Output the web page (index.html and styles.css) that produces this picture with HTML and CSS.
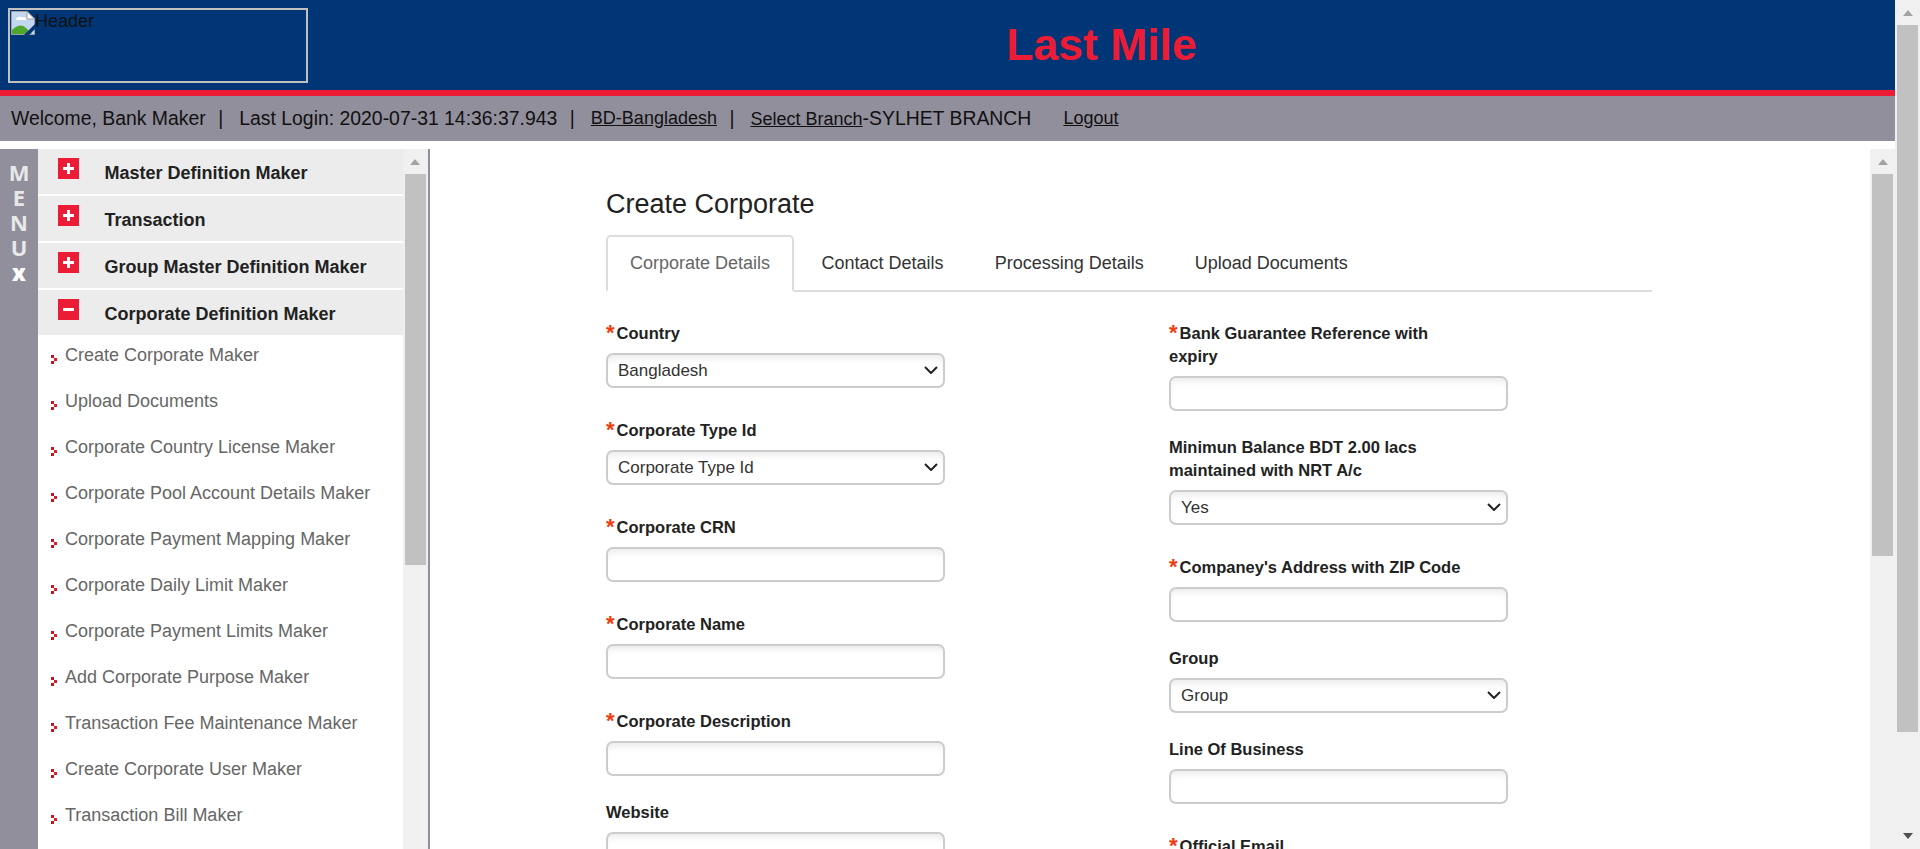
FILE: index.html
```html
<!DOCTYPE html>
<html lang="en">
<head>
    <meta charset="UTF-8">
    <meta name="viewport" content="width=device-width, initial-scale=1.0">
    <title>Last Mile - Create Corporate</title>
    <link rel="stylesheet" href="styles.css">
</head>
<body>
    <div class="page">
        <div class="page-content">
            <header class="header">
                <div class="header-logo">
                    <svg class="broken-img" viewBox="0 0 24 24" width="24" height="24">
                        <path d="M0.5 0.5H16L23.5 8V23.5H0.5Z" fill="#c3d7f0" stroke="#a0a0a0"/>
                        <path d="M16 0.5V8H23.5Z" fill="#fff" stroke="#a0a0a0"/>
                        <path d="M5 9C5 6 9 5 11 6.5C13 5 16 7 15.5 9Z" fill="#fff"/>
                        <path d="M1 23V19C6 14 11 13 15 17L21 23Z" fill="#4fa62f"/>
                        <path d="M13 24L24 13V18L18 24Z" fill="#003675"/>
                    </svg>
                    <span class="header-alt">Header</span>
                </div>
                <h1 class="header-title">Last Mile</h1>
            </header>
            <nav class="topbar">
                <span>Welcome, Bank Maker</span>
                <span class="sep">|</span>
                <span>Last Login: 2020-07-31 14:36:37.943</span>
                <span class="sep">|</span>
                <a href="#">BD-Bangladesh</a>
                <span class="sep">|</span>
                <span><a href="#">Select Branch</a>-SYLHET BRANCH</span>
                <a class="logout" href="#">Logout</a>
            </nav>
            <div class="workspace">
                <div class="menu-tab">
                    <span>M</span><span>E</span><span>N</span><span>U</span><span class="menu-close">x</span>
                </div>
                <aside class="menu">
                    <div class="menu-head">
                        <svg class="toggle" viewBox="0 0 21 21"><rect width="21" height="21" fill="#ed1c36"/><path d="M5 10.5H16M10.5 5V16" stroke="#fff" stroke-width="3"/></svg>
                        <span>Master Definition Maker</span>
                    </div>
                    <div class="menu-head">
                        <svg class="toggle" viewBox="0 0 21 21"><rect width="21" height="21" fill="#ed1c36"/><path d="M5 10.5H16M10.5 5V16" stroke="#fff" stroke-width="3"/></svg>
                        <span>Transaction</span>
                    </div>
                    <div class="menu-head">
                        <svg class="toggle" viewBox="0 0 21 21"><rect width="21" height="21" fill="#ed1c36"/><path d="M5 10.5H16M10.5 5V16" stroke="#fff" stroke-width="3"/></svg>
                        <span>Group Master Definition Maker</span>
                    </div>
                    <div class="menu-head">
                        <svg class="toggle" viewBox="0 0 21 21"><rect width="21" height="21" fill="#ed1c36"/><path d="M5 10.5H16" stroke="#fff" stroke-width="3"/></svg>
                        <span>Corporate Definition Maker</span>
                    </div>
                    <ul class="menu-list">
                        <li><a href="#">Create Corporate Maker</a></li>
                        <li><a href="#">Upload Documents</a></li>
                        <li><a href="#">Corporate Country License Maker</a></li>
                        <li><a href="#">Corporate Pool Account Details Maker</a></li>
                        <li><a href="#">Corporate Payment Mapping Maker</a></li>
                        <li><a href="#">Corporate Daily Limit Maker</a></li>
                        <li><a href="#">Corporate Payment Limits Maker</a></li>
                        <li><a href="#">Add Corporate Purpose Maker</a></li>
                        <li><a href="#">Transaction Fee Maintenance Maker</a></li>
                        <li><a href="#">Create Corporate User Maker</a></li>
                        <li><a href="#">Transaction Bill Maker</a></li>
                    </ul>
                </aside>
                <div class="scrollbar menu-scroll">
                    <div class="arrow-up"></div>
                    <div class="thumb thumb-menu"></div>
                </div>
                <main class="main">
                    <h2 class="main-title">Create Corporate</h2>
                    <div class="tabs">
                        <a class="tab active" href="#">Corporate Details</a>
                        <a class="tab" href="#">Contact Details</a>
                        <a class="tab" href="#">Processing Details</a>
                        <a class="tab" href="#">Upload Documents</a>
                    </div>
                    <form class="form-grid">
                        <div class="form-col">
                            <div class="field">
                                <label class="req"><i>*</i>Country</label>
                                <select><option>Bangladesh</option></select>
                            </div>
                            <div class="field">
                                <label class="req"><i>*</i>Corporate Type Id</label>
                                <select><option>Corporate Type Id</option></select>
                            </div>
                            <div class="field">
                                <label class="req"><i>*</i>Corporate CRN</label>
                                <input type="text">
                            </div>
                            <div class="field">
                                <label class="req"><i>*</i>Corporate Name</label>
                                <input type="text">
                            </div>
                            <div class="field">
                                <label class="req"><i>*</i>Corporate Description</label>
                                <input type="text">
                            </div>
                            <div class="field">
                                <label>Website</label>
                                <input type="text">
                            </div>
                        </div>
                        <div class="form-col">
                            <div class="field">
                                <label class="req"><i>*</i>Bank Guarantee Reference with expiry</label>
                                <input type="text">
                            </div>
                            <div class="field">
                                <label>Minimun Balance BDT 2.00 lacs maintained with NRT A/c</label>
                                <select><option>Yes</option></select>
                            </div>
                            <div class="field">
                                <label class="req"><i>*</i>Companey's Address with ZIP Code</label>
                                <input type="text">
                            </div>
                            <div class="field">
                                <label>Group</label>
                                <select><option>Group</option></select>
                            </div>
                            <div class="field">
                                <label>Line Of Business</label>
                                <input type="text">
                            </div>
                            <div class="field">
                                <label class="req"><i>*</i>Official Email</label>
                                <input type="text">
                            </div>
                        </div>
                    </form>
                </main>
                <div class="scrollbar main-scroll">
                    <div class="arrow-up"></div>
                    <div class="thumb thumb-main"></div>
                </div>
            </div>
        </div>
        <div class="scrollbar page-scroll">
            <div class="arrow-up"></div>
            <div class="thumb thumb-page"></div>
            <div class="arrow-down"></div>
        </div>
    </div>
</body>
</html>
```
FILE: styles.css
```css
* {
    margin: 0;
    padding: 0;
    box-sizing: border-box;
    font-family: "Liberation Sans", Arial, sans-serif;
}

html, body {
    height: 100%;
    overflow: hidden;
}

body {
    background: #fff;
    color: #000;
}

.page {
    display: flex;
    height: 849px;
}

.page-content {
    flex: 1;
    min-width: 0;
    display: flex;
    flex-direction: column;
}

/* header */
.header {
    height: 96px;
    flex-shrink: 0;
    background: #003675;
    border-bottom: 6px solid #ed1c36;
    display: flex;
    padding: 8px 0 0 8px;
}

.header-logo {
    width: 300px;
    height: 75px;
    border: 2px solid #c0c0c0;
    display: flex;
    align-items: flex-start;
    font-size: 18px;
    color: #111;
    padding: 1px;
}

.broken-img {
    flex-shrink: 0;
}

.header-alt {
    line-height: 20px;
}

.header-title {
    flex: 1;
    text-align: center;
    font-size: 44.5px;
    font-weight: bold;
    color: #ed1c36;
    line-height: 74px;
    padding: 0 251px;
}

/* welcome bar */
.topbar {
    height: 45px;
    flex-shrink: 0;
    background: #918f9c;
    display: flex;
    align-items: center;
    padding-left: 11px;
    font-size: 19.4px;
    color: #111;
    margin-bottom: 8px;
}

.topbar a {
    color: #111;
    font-size: 18px;
}

.topbar .sep {
    margin: 0 16px 0 12.5px;
}

.topbar .logout {
    margin-left: 32px;
}

/* menu */
.workspace {
    flex: 1;
    min-height: 0;
    display: flex;
    overflow: hidden;
}

.menu-tab {
    width: 38px;
    flex-shrink: 0;
    background: #918f9c;
    display: flex;
    flex-direction: column;
    align-items: center;
    padding-top: 11px;
}

.menu-tab span {
    font-family: "Open Sans", sans-serif;
    font-size: 22px;
    line-height: 25px;
    color: #e8e8e8;
    font-weight: 700;
}

.menu-tab .menu-close {
    font-weight: 800;
    color: #fff;
}

.menu {
    width: 365px;
    flex-shrink: 0;
}

.menu-head {
    height: 47px;
    background: #ececec;
    border-bottom: 2px solid #fff;
    display: flex;
    align-items: flex-start;
    padding-left: 20px;
    font-size: 18px;
    font-weight: bold;
    color: #222;
}

.menu-head:nth-child(4) {
    height: 45px;
    border-bottom: 0;
}

.toggle {
    width: 21px;
    height: 21px;
    margin-top: 9px;
    flex-shrink: 0;
}

.menu-head span {
    margin: 14px 0 0 25.5px;
    line-height: 20px;
}

.menu-list {
    list-style: none;
}

.menu-list li {
    height: 46px;
    padding: 10px 0 0 27px;
    font-size: 18px;
    line-height: 20px;
    position: relative;
}

/* small pixel bullet */
.menu-list li::before {
    content: "";
    position: absolute;
    left: 13px;
    top: 20px;
    width: 3px;
    height: 3px;
    background: #c4161c;
    box-shadow: 3px 3px 0 #e01a22, 0 6px 0 #c4161c;
}

.menu-list a {
    color: #666;
    text-decoration: none;
}

/* scrollbars */
.scrollbar {
    width: 25px;
    flex-shrink: 0;
    background: #f0f0f0;
    display: flex;
    flex-direction: column;
    align-items: center;
    position: relative;
}

.arrow-up {
    margin-top: 10px;
    margin-bottom: 9px;
    width: 0;
    height: 0;
    border-left: 5.5px solid transparent;
    border-right: 5.5px solid transparent;
    border-bottom: 6px solid #a3a3a3;
}

.arrow-down {
    position: absolute;
    bottom: 10px;
    width: 0;
    height: 0;
    border-left: 5.5px solid transparent;
    border-right: 5.5px solid transparent;
    border-top: 6px solid #505050;
}

.thumb {
    width: 21px;
    background: #c1c1c1;
}

.thumb-menu {
    height: 391px;
}

.thumb-main {
    height: 382px;
}

.thumb-page {
    height: 707px;
}

.menu-scroll {
    width: 27px;
    box-shadow: inset -2px 0 0 #918f9c;
    align-items: flex-start;
    padding-left: 2px;
}

.menu-scroll .arrow-up {
    margin-left: 5px;
}

/* main panel */
.main {
    flex: 1;
    min-width: 0;
    padding: 39px 218px 0 176px;
    overflow: hidden;
}

.main-title {
    font-size: 27px;
    font-weight: normal;
    color: #222;
    line-height: 32px;
    margin-bottom: 15px;
}

.tabs {
    display: flex;
    height: 57px;
    border-bottom: 2px solid #ddd;
}

.tab {
    height: 57px;
    padding: 0 25.5px;
    font-size: 18px;
    line-height: 57px;
    color: #333;
    text-decoration: none;
}

.tab.active {
    padding: 0 22px;
    margin-right: 2px;
    border: 2px solid #ddd;
    border-bottom: 2px solid #fff;
    border-radius: 5px 5px 0 0;
    color: #666;
    line-height: 53px;
}

.form-grid {
    display: flex;
    margin-top: 24px;
}

.form-col {
    width: 339px;
    margin-right: 224px;
}

.field {
    margin-bottom: 25.5px;
}

.field label {
    display: block;
    max-width: 296px;
    font-size: 16.5px;
    font-weight: bold;
    color: #222;
    line-height: 23px;
    margin-bottom: 7.5px;
}

.field label.req {
    padding-top: 5.5px;
    margin-bottom: 8px;
}

.field label i {
    font-style: normal;
    font-size: 22px;
    line-height: 10px;
    color: #f03c10;
    margin-right: 2px;
    vertical-align: -1px;
}

.field input,
.field select {
    display: block;
    width: 339px;
    height: 35px;
    border: 2px solid #ccc;
    border-radius: 7px;
    background-color: #fff;
    box-shadow: inset 0 8px 8px -6px #e6e6e6;
    padding: 0 10px;
    font-size: 17px;
    color: #333;
}

.field select {
    appearance: none;
    background-image: url("data:image/svg+xml,%3Csvg xmlns='http://www.w3.org/2000/svg' width='14' height='8'%3E%3Cpath d='M1 1l6 6 6-6' fill='none' stroke='%23222' stroke-width='2'/%3E%3C/svg%3E");
    background-repeat: no-repeat;
    background-position: right 5px center;
}
```
